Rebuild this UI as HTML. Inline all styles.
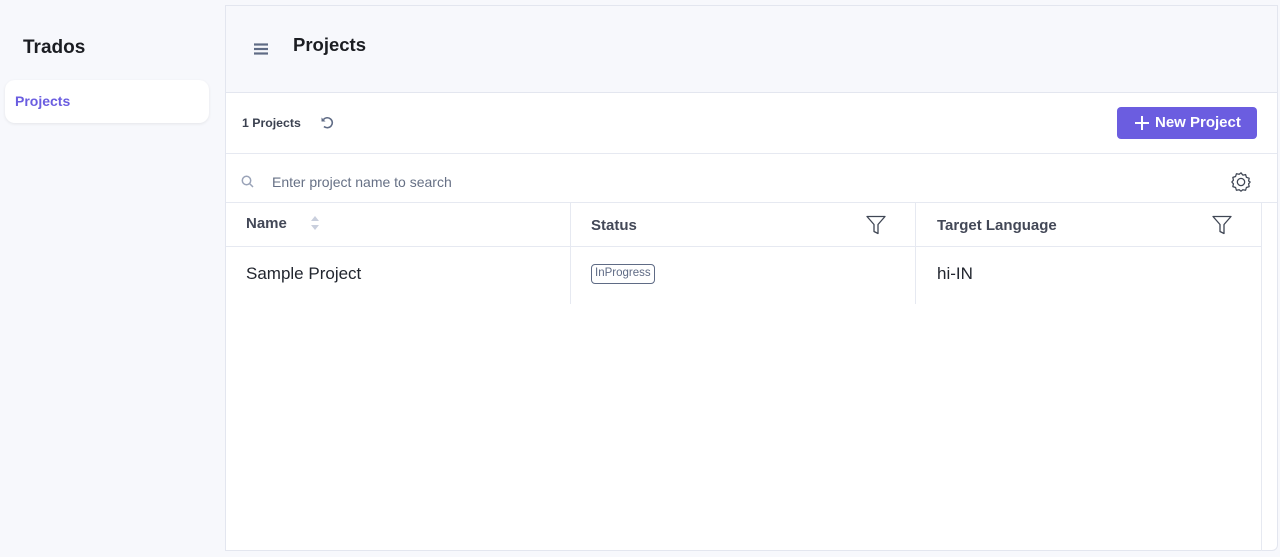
<!DOCTYPE html>
<html><head><style>
*{box-sizing:border-box;margin:0;padding:0}
body{width:1280px;height:557px;background:#f7f8fc;font-family:"Liberation Sans",sans-serif;position:relative;overflow:hidden;color:#1f2430}
.abs{position:absolute}
.brand{left:23px;top:37px;font-size:19px;font-weight:bold;color:#1b1d22}
.nav{left:5px;top:80px;width:204px;height:43px;background:#fff;border-radius:10px;box-shadow:0 1px 3px rgba(0,0,0,.08);color:#6a5de0;font-weight:bold;font-size:14px;padding:13px 10px}
.main{left:225px;top:5px;width:1053px;height:546px;background:#fff;border:1px solid #e3e6ef;border-radius:0 0 6px 0}
.head{left:0;top:0;width:1051px;height:87px;background:#f7f8fc;border-bottom:1px solid #e3e6ef}
.line{background:#e6e9f1}
.th{font-size:15px;font-weight:bold;color:#434857}
</style></head><body>
<div class="abs brand">Trados</div>
<div class="abs nav">Projects</div>
<div class="abs main">
 <div class="abs head"></div>
 <svg class="abs" style="left:28px;top:37px" width="14" height="12"><g stroke="#5f6b85" stroke-width="2.2"><line x1="0" y1="1.5" x2="14" y2="1.5"/><line x1="0" y1="6" x2="14" y2="6"/><line x1="0" y1="10.5" x2="14" y2="10.5"/></g></svg>
 <div class="abs" style="left:67px;top:28px;font-size:18.5px;font-weight:bold;color:#1b1d22">Projects</div>
 <div class="abs" style="left:16px;top:110px;font-size:12.3px;font-weight:bold;color:#3b4150">1 Projects</div>
 <svg class="abs" style="left:94px;top:109px" width="16" height="16" viewBox="0 0 16 16"><path d="M3.5 4.5A5 5 0 1 1 4 11.5" fill="none" stroke="#5f6b85" stroke-width="1.6"/><path d="M1.5 2.5v4h4z" fill="#5f6b85"/></svg>
 <div class="abs" style="left:891px;top:101px;width:140px;height:32px;background:#6b5de0;border-radius:4px;color:#fff;font-size:15px;font-weight:bold;padding:7px 0 0 38px">New Project</div>
 <svg class="abs" style="left:909px;top:110px" width="14" height="14"><g stroke="#fff" stroke-width="2"><line x1="7" y1="0" x2="7" y2="14"/><line x1="0" y1="7" x2="14" y2="7"/></g></svg>
 <div class="abs line" style="left:0;top:147px;width:1051px;height:1px"></div>
 <svg class="abs" style="left:15px;top:169px" width="13" height="13"><circle cx="5.5" cy="5.5" r="4.2" fill="none" stroke="#9aa3b8" stroke-width="1.5"/><line x1="8.5" y1="8.5" x2="12" y2="12" stroke="#9aa3b8" stroke-width="1.5"/></svg>
 <div class="abs" style="left:46px;top:168px;font-size:14px;color:#667085">Enter project name to search</div>
 <svg class="abs" style="left:1004px;top:165px" width="22" height="22" viewBox="0 0 24 24"><path d="M12 2l2 2.5 3-.6.9 3 3 1-.6 3L22 12l-1.7 2 .6 3-3 1-.9 3-3-.6L12 22l-2-1.6-3 .6-.9-3-3-1 .6-3L2 12l1.7-2-.6-3 3-1 .9-3 3 .6z" fill="none" stroke="#3f4654" stroke-width="1.4" stroke-linejoin="round"/><circle cx="12" cy="12" r="4" fill="none" stroke="#3f4654" stroke-width="1.4"/></svg>
 <div class="abs line" style="left:0;top:196px;width:1051px;height:1px"></div>
 <div class="abs line" style="left:0;top:240px;width:1036px;height:1px"></div>
 <div class="abs line" style="left:344px;top:197px;width:1px;height:101px"></div>
 <div class="abs line" style="left:689px;top:197px;width:1px;height:101px"></div>
 <div class="abs line" style="left:1035px;top:197px;width:1px;height:348px"></div>
 <div class="abs th" style="left:20px;top:209px">Name</div>
 <svg class="abs" style="left:85px;top:210px" width="8" height="14"><path d="M4 0L8 5H0z" fill="#c9cfdd"/><path d="M4 14L8 9H0z" fill="#c9cfdd"/></svg>
 <div class="abs th" style="left:365px;top:211px">Status</div>
 <svg class="abs" style="left:640px;top:209px" width="20" height="20" viewBox="0 0 20 20"><path d="M1 1.5h18l-7 8v9l-4-2v-7z" fill="none" stroke="#3f4654" stroke-width="1.3" stroke-linejoin="round"/></svg>
 <div class="abs th" style="left:711px;top:211px">Target Language</div>
 <svg class="abs" style="left:986px;top:209px" width="20" height="20" viewBox="0 0 20 20"><path d="M1 1.5h18l-7 8v9l-4-2v-7z" fill="none" stroke="#3f4654" stroke-width="1.3" stroke-linejoin="round"/></svg>
 <div class="abs" style="left:20px;top:258px;font-size:17px;color:#22262f">Sample Project</div>
 <div class="abs" style="left:365px;top:258px;height:20px;padding:2px 3px;border:1px solid #5f6b85;border-radius:4px;font-size:11.5px;color:#5f6b85">InProgress</div>
 <div class="abs" style="left:711px;top:258px;font-size:17px;color:#22262f">hi-IN</div>
</div>
</body></html>
